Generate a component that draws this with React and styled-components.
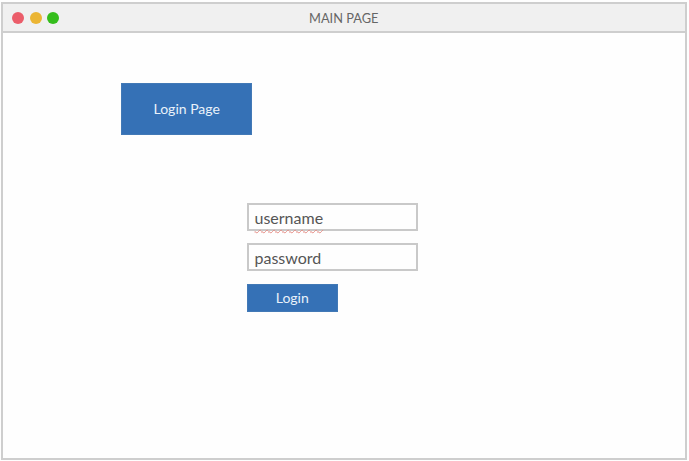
import React from "react";
import styled, { createGlobalStyle } from "styled-components";

const GlobalStyle = createGlobalStyle`
  *, *::before, *::after { box-sizing: border-box; }
  body { margin: 0; background: #fefefe; font-family: Lato, sans-serif; overflow: hidden; }
`;

const Window = styled.main`
  width: 686px;
  height: 458px;
  margin: 2px 0 0 1px;
  border: 2px solid #cecece;
  background: #fefefe;
`;

const TitleBar = styled.header`
  display: grid;
  grid-template-columns: 1fr auto 1fr;
  align-items: center;
  height: 29px;
  padding: 0 10px 0 9.4px;
  background: #f0f0f0;
  border-bottom: 2px solid #cecece;
`;

const WindowControls = styled.div`
  display: flex;
  gap: 5.2px;
`;

const Dot = styled.span`
  width: 12px;
  height: 12px;
  border-radius: 50%;
  background: ${({ $color }) => $color};
`;

const Title = styled.h1`
  margin: 0;
  color: #666;
  font-size: 12.8px;
  font-weight: 400;
  line-height: 18px;
  white-space: nowrap;
`;

const Content = styled.div`
  padding: 50px 0 0 118px;
`;

const Button = styled.button`
  display: flex;
  align-items: center;
  justify-content: center;
  width: ${({ $large }) => ($large ? "131.4px" : "91.5px")};
  height: ${({ $large }) => ($large ? "51.5px" : "28.5px")};
  padding: 0;
  border: 1px solid #4279b6;
  background: #3571b6;
  color: #e9f1fa;
  font: 400 14px/20px Lato, sans-serif;
`;

const Form = styled.form`
  display: flex;
  flex-direction: column;
  align-items: flex-start;
  gap: 12.3px;
  margin: 68.5px 0 0 125.5px;
`;

const Field = styled.div`
  width: 171px;
  height: 28px;
  padding: 0 6px;
  border: 2px solid #c9c9c9;
  background: #fefefe;
  color: #555;
  font-size: 16px;
  line-height: 26px;
`;

const Misspelled = styled.span`
  text-decoration: underline wavy #e58b83 1px;
  text-decoration-skip-ink: none;
  text-underline-offset: 5px;
`;

export default function App() {
  return (
    <>
      <GlobalStyle />
      <Window>
        <TitleBar>
          <WindowControls>
            <Dot $color="#eb5d6a" />
            <Dot $color="#ebb534" />
            <Dot $color="#35bd1c" />
          </WindowControls>
          <Title>MAIN PAGE</Title>
        </TitleBar>
        <Content>
          <Button type="button" $large>Login Page</Button>
          <Form>
            <Field><Misspelled>username</Misspelled></Field>
            <Field>password</Field>
            <Button type="button">Login</Button>
          </Form>
        </Content>
      </Window>
    </>
  );
}
